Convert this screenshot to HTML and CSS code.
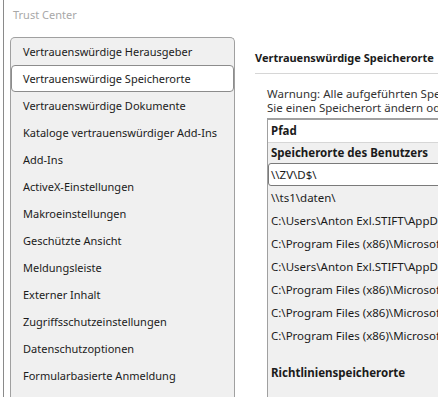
FILE: index.html
```html
<!DOCTYPE html>
<html lang="de">
<head>
  <meta charset="UTF-8">
  <meta name="viewport" content="width=device-width, initial-scale=1.0">
  <title>Trust Center</title>
  <link rel="stylesheet" href="styles.css">
</head>
<body>

  <!-- Fenster Trust Center -->
  <div class="window">
    <div class="title">Trust Center</div>

    <div class="main">
      <!-- Navigation links -->
      <ul class="nav">
        <li>Vertrauenswürdige Herausgeber</li>
        <li class="selected">Vertrauenswürdige Speicherorte</li>
        <li>Vertrauenswürdige Dokumente</li>
        <li>Kataloge vertrauenswürdiger Add-Ins</li>
        <li>Add-Ins</li>
        <li>ActiveX-Einstellungen</li>
        <li>Makroeinstellungen</li>
        <li>Geschützte Ansicht</li>
        <li>Meldungsleiste</li>
        <li>Externer Inhalt</li>
        <li>Zugriffsschutzeinstellungen</li>
        <li>Datenschutzoptionen</li>
        <li>Formularbasierte Anmeldung</li>
      </ul>

      <!-- Inhalt rechts -->
      <div class="content">
        <h2 class="heading">Vertrauenswürdige Speicherorte</h2>
        <p class="warning">
          Warnung: Alle aufgeführten Speicherorte werden als vertrauenswürdige Quellen zum Öffnen von Dateien behandelt. Wenn<br>
          Sie einen Speicherort ändern oder hinzufügen, vergewissern Sie sich, dass der neue Speicherort sicher ist.
        </p>

        <div class="table">
          <div class="table-head">Pfad</div>
          <div class="group">Speicherorte des Benutzers</div>
          <div class="row active">\\ZV\D$\</div>
          <div class="row">\\ts1\daten\</div>
          <div class="row">C:\Users\Anton Exl.STIFT\AppData\Roaming\Microsoft\Templates\</div>
          <div class="row">C:\Program Files (x86)\Microsoft Office\root\Templates\</div>
          <div class="row">C:\Users\Anton Exl.STIFT\AppData\Roaming\Microsoft\Word\Startup\</div>
          <div class="row">C:\Program Files (x86)\Microsoft Office\root\Office16\Library\</div>
          <div class="row">C:\Program Files (x86)\Microsoft Office\root\Office16\STARTUP\</div>
          <div class="row">C:\Program Files (x86)\Microsoft Office\root\Office16\XLSTART\</div>
          <div class="group group-gap">Richtlinienspeicherorte</div>
        </div>
      </div>
    </div>
  </div>

</body>
</html>
```
FILE: styles.css
```css
/* Grundlayout */
body {
  margin: 0;
  width: 438px;
  height: 397px;
  overflow: hidden;
  background-color: white;
  font-family: "Noto Sans", sans-serif;
  font-size: 11px;
  color: #1b1b1b;
}
.window {
  margin-left: 3px;
  height: 397px;
  border-left: 1px solid #8a8a8a;
}
.title {
  height: 37px;
  padding: 7px 0 0 9px;
  box-sizing: border-box;
  line-height: 16px;
  color: #a8a8a8;
}
.main {
  display: flex;
  height: 360px;
}

/* Navigation */
.nav {
  list-style: none;
  flex: none;
  width: 223px;
  margin: 0 0 0 6px;
  padding: 0;
  background-color: #f0f0f0;
  border: 1px solid #a0a0a0;
  border-bottom: none;
  border-radius: 5px 5px 0 0;
}
.nav li {
  height: 27px;
  line-height: 27px;
  padding-left: 12px;
  white-space: nowrap;
}
.nav .selected {
  height: 25px;
  line-height: 25px;
  padding-left: 11px;
  background-color: white;
  border: 1px solid #8c8c8c;
  border-radius: 4px;
}

/* Inhalt */
.content {
  flex: none;
  width: 700px;
  padding: 13px 0 0 20px;
}
.heading {
  margin: 0;
  padding-bottom: 7px;
  font-size: 11px;
  line-height: 16px;
  font-weight: bold;
  border-bottom: 1px solid #d6d6d6;
}
.warning {
  margin: 13px 0 0 12px;
  font-size: 11.5px;
  line-height: 14px;
  white-space: nowrap;
  color: #333;
}
.table {
  margin: 3px 0 0 12px;
  font-size: 11.5px;
  border-left: 1px solid #a0a0a0;
  border-top: 2px solid #a0a0a0;
  background-color: #f0f0f0;
  height: 300px;
}
.table-head {
  height: 22px;
  line-height: 22px;
  padding-left: 3px;
  background-color: white;
  font-weight: bold;
  border-bottom: 1px solid #d6d6d6;
}
.group {
  height: 20px;
  line-height: 20px;
  padding-left: 3px;
  font-weight: bold;
}
.group-gap {
  margin-top: 16px;
}
.row {
  height: 23px;
  line-height: 23px;
  padding-left: 3px;
  white-space: nowrap;
}
.row.active {
  height: 21px;
  line-height: 21px;
  padding-left: 2px;
  background-color: white;
  border: 1px solid #7a7a7a;
  border-radius: 3px;
}
```
